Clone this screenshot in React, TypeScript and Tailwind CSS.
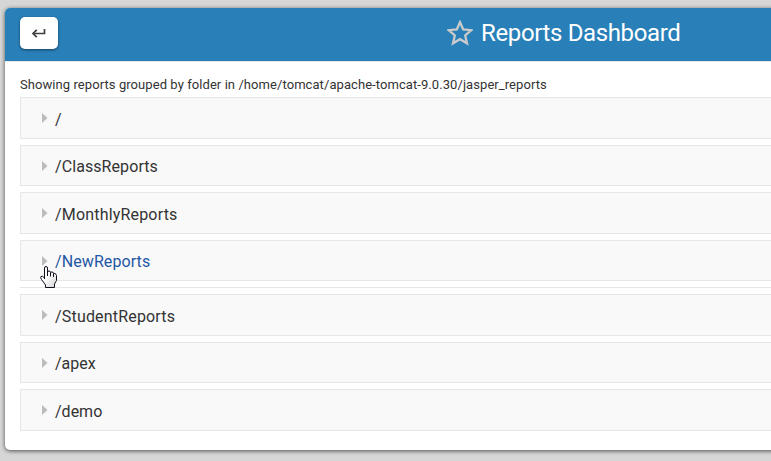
const folders = [
  { name: "/", box: "h-[42px] mb-1.5", text: "" },
  { name: "/ClassReports", box: "h-[41px] mb-1.5", text: "tracking-[0.08px]" },
  { name: "/MonthlyReports", box: "h-[42px] mb-1.5", text: "tracking-[0.18px]" },
  { name: "/NewReports", box: "h-[41px] mb-1.5", text: "tracking-[0.09px] text-[#1f57a4]", active: true },
  { name: "/StudentReports", box: "h-[42px] mb-1.5", text: "tracking-[0.18px]" },
  { name: "/apex", box: "h-[41px] mb-1.5", text: "" },
  { name: "/demo", box: "h-[42px]", text: "" },
];

function HandCursor() {
  return (
    <svg className="absolute left-[19px] top-[25px] z-10" width="17" height="22" viewBox="0 0 17 22">
      <defs>
        <linearGradient id="hand" x1="0" y1="0" x2="1" y2="1">
          <stop offset="0.4" stopColor="#fff" />
          <stop offset="1" stopColor="#d4d4d4" />
        </linearGradient>
      </defs>
      <path
        d="M4.500 13V2Q4.500 .5 6 .5T7.500 2V6Q7.500 5 9 5T10.500 6.500Q10.500 6 12 6T13.500 7.500Q14 7.200 15 7.500T16.500 9.500V14.500L14.500 18V21.500H5.500V19L1.500 13.500Q0 11.500 1 10.500Q2.500 9.500 4.500 12Z"
        fill="url(#hand)"
        stroke="#10101c"
      />
      <path d="M7.500 5V10M10.500 6.500V10.500M13.500 7.500V11" fill="none" stroke="#10101c" />
    </svg>
  );
}

export default function App() {
  return (
    <div className="h-[461px] w-full overflow-hidden bg-[#d6d6d6] pl-[5px] pt-2 font-['Roboto',sans-serif] text-[#333]">
      <main className="h-[442px] w-[790px] overflow-hidden rounded-[5px] bg-white shadow-[0_1px_4px_rgba(0,0,0,0.65)]">
        <header className="flex h-[54px] border-b border-[#e2e7ea] bg-[#2980b9] bg-clip-padding pl-[15px]">
          <button className="mt-[9px] flex h-8 w-[38px] items-center justify-center rounded-[5px] bg-white shadow-[0_1px_3px_rgba(0,0,0,0.5)]">
            <svg width="14" height="10" viewBox="0 0 14 10" className="-mt-px">
              <path d="M12.500 1V5.500H2" fill="none" stroke="#404040" strokeWidth="1.7" />
              <path d="M4.800 1.800L1 5.500L4.800 9.200" fill="none" stroke="#404040" strokeWidth="1.7" />
            </svg>
          </button>
          <h1 className="ml-[389px] flex h-[50px] items-center text-2xl tracking-[-0.37px] text-white">
            <svg width="26" height="26" viewBox="0 0 26 26" className="mr-2">
              <path d="M13 2.200L16.200 9.500L24.200 10.200L18.200 15.500L20 23.300L13 19.200L6 23.300L7.800 15.500L1.800 10.200L9.800 9.500Z" fill="none" stroke="#c9cacb" strokeWidth="2.3" />
            </svg>
            Reports Dashboard
          </h1>
        </header>
        <section className="px-[15px] pt-[14px]">
          <p className="h-[21px] text-[13px] leading-[18px] tracking-[0.072px]">
            Showing reports grouped by folder in /home/tomcat/apache-tomcat-9.0.30/jasper_reports
          </p>
          {folders.map((folder) => (
            <div key={folder.name}>
              <div className={`relative flex items-center border border-[#e6e6e6] bg-[#f9f9f9] pl-[21px] ${folder.box}`}>
                <svg width="6" height="10" viewBox="0 0 6 10" className="mr-[7px]">
                  <path d="M0 0L5.500 5L0 10Z" fill="#bcbcbc" />
                </svg>
                <span className={`mt-[3px] text-base ${folder.text}`}>{folder.name}</span>
                {folder.active && <HandCursor />}
              </div>
              {folder.active && <div className="mb-1.5 h-px bg-[#e6e6e6]" />}
            </div>
          ))}
        </section>
      </main>
    </div>
  );
}
